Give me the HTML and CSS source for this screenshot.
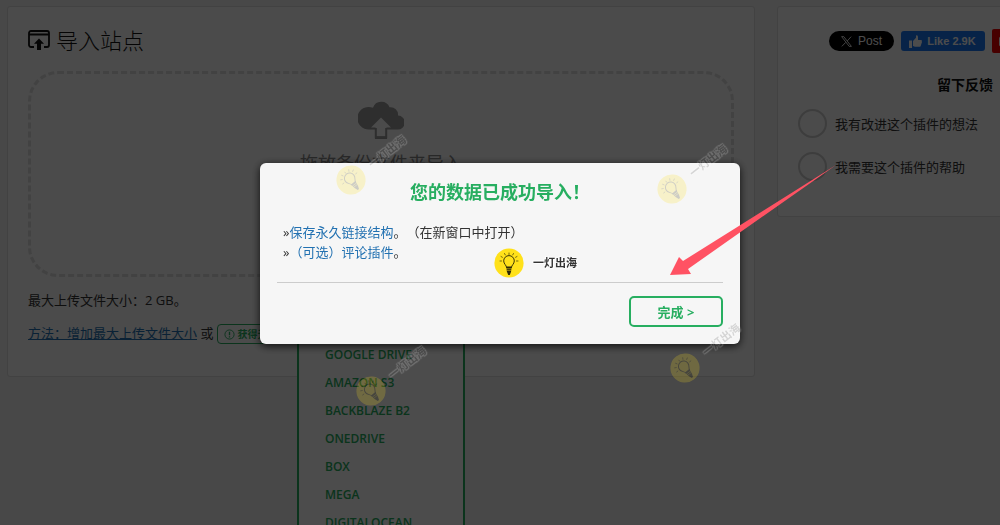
FILE: index.html
```
<!DOCTYPE html>
<html lang="zh-CN">
  <head>
    <meta charset="utf-8">
    <title>导入站点</title>
    <link rel="stylesheet" href="styles.css">
  </head>
  <body>
    <svg class="sprite" aria-hidden="true">
      <symbol id="bulb" viewBox="0 0 30 30">
        <circle cx="15" cy="15" r="14.6" fill="#ffe11a"/>
        <g fill="none" stroke="#3a3408" stroke-linecap="round">
          <path d="M12.600 19.500c0-2.400-2.900-3.400-2.900-6.600a5.300 5.300 0 0 1 10.600 0c0 3.200-2.900 4.200-2.900 6.600"/>
          <path d="M15 5v1.500M10.500 5.500l.8 1.400M19.500 5.500l-.8 1.400M7 8.500l1.400.8M23 8.500l-1.400.8M6 13h1.500M24 13h-1.500" stroke-width=".7"/>
        </g>
        <path d="M12.300 18.500h5.400l-.6 5-1.300 3.500h-1.600L12.900 23.500z" fill="#2d2906"/>
        <path d="M12.500 20.700h5M12.800 22.400h4.500" stroke="#ffe11a" stroke-width=".5"/>
      </symbol>
    </svg>

    <div class="page">
      <main class="card import">
        <h1>
          <svg class="title-icon" viewBox="0 0 22 20" aria-hidden="true">
            <path d="M6 17H3a2 2 0 0 1-2-2V3a2 2 0 0 1 2-2h16a2 2 0 0 1 2 2v12a2 2 0 0 1-2 2h-3M1 4.500h20" fill="none" stroke="currentColor" stroke-width="1.800"/>
            <path d="M11 8.500l5 5.200h-3V20H9v-6.300H6z" fill="currentColor"/>
          </svg>
          导入站点
        </h1>
        <div class="dropzone">
          <svg class="cloud" viewBox="0 0 46 38" aria-hidden="true">
            <path d="M11.500 28.500A11.300 11.300 0 1 1 15 6.800a8.800 8.800 0 0 1 16.500-.500A7.500 7.500 0 0 1 40 14.500a7 7 0 0 1-.500 14z" fill="#999"/>
            <path d="M18 27h10v10H18z" fill="#999" stroke="#999" stroke-width="2"/>
            <path d="M23 16.500l10 10h-4.500v9h-11v-9H13z" fill="#fafafa"/>
            <path d="M17.800 27v9.300h10.400V27" fill="none" stroke="#999" stroke-width="2"/>
          </svg>
          <p>拖放备份文件来导入</p>
          <ul class="sources">
            <li><a href="#">Google Drive</a></li>
            <li><a href="#">Amazon S3</a></li>
            <li><a href="#">Backblaze B2</a></li>
            <li><a href="#">OneDrive</a></li>
            <li><a href="#">Box</a></li>
            <li><a href="#">Mega</a></li>
            <li><a href="#">DigitalOcean</a></li>
          </ul>
        </div>
        <p class="limit">最大上传文件大小：2 GB。</p>
        <p class="how">
          <a href="#">方法：增加最大上传文件大小</a> 或
          <button class="unlimited" type="button">
            <svg viewBox="0 0 12 12" aria-hidden="true">
              <circle cx="6" cy="6" r="5" fill="none" stroke="currentColor"/>
              <path d="M6 3v3.800M6 8v1.300" stroke="currentColor" stroke-width="1.400"/>
            </svg>
            获得无限制
          </button>
        </p>
      </main>

      <aside class="sidebar">
        <div class="card feedback">
          <div class="social">
            <button class="post" type="button">
              <svg viewBox="0 0 12 12" aria-hidden="true">
                <path d="M1.500 1.500h2L10.500 10.500h-2zM10.300 1.500L6.700 5.500M5.300 6.800L1.700 10.500" fill="none" stroke="currentColor" stroke-width=".8"/>
              </svg>
              Post
            </button>
            <button class="like" type="button">
              <svg viewBox="0 0 13 13" aria-hidden="true">
                <path d="M0 5.500h3V13H0zM4 6l3-3.200V.800C7 0 9 0 9 2v3h3c1 0 1.200 1 .700 1.700.400.600.200 1.300-.300 1.700.200.600 0 1.200-.500 1.600.100.900-.300 1.800-1.400 1.800H6L4 11z" fill="currentColor"/>
              </svg>
              Like 2.9K
            </button>
            <button class="youtube" type="button" aria-label="YouTube">
              <svg viewBox="0 0 18 14" aria-hidden="true">
                <rect width="18" height="14" rx="3" fill="#fff"/>
                <path d="M7 4l5 3-5 3z" fill="#e00"/>
              </svg>
            </button>
          </div>
          <h2>留下反馈</h2>
          <label><input type="radio" name="feedback"> 我有改进这个插件的想法</label>
          <label><input type="radio" name="feedback"> 我需要这个插件的帮助</label>
        </div>
      </aside>
    </div>

    <div class="overlay">
      <section class="modal" role="dialog" aria-labelledby="modal-title">
        <h2 id="modal-title">您的数据已成功导入！</h2>
        <p>»<a href="#">保存永久链接结构</a>。（在新窗口中打开）</p>
        <p>»<a href="#">（可选）评论插件</a>。</p>
        <footer>
          <button class="done" type="button">完成 &gt;</button>
        </footer>
      </section>
    </div>

    <div class="marks">
      <div class="mark solid"><svg><use href="#bulb"/></svg><span>一灯出海</span></div>
      <div class="mark faint top-left"><svg><use href="#bulb"/></svg><span>一灯出海</span></div>
      <div class="mark faint top-right"><svg><use href="#bulb"/></svg><span>一灯出海</span></div>
      <div class="mark faint bottom-left"><svg><use href="#bulb"/></svg><span>一灯出海</span></div>
      <div class="mark faint bottom-right"><svg><use href="#bulb"/></svg><span>一灯出海</span></div>
      <svg class="arrow" viewBox="0 0 166 110" aria-hidden="true">
        <path d="M0 110L9 92l4 4L166 0 18 104l3 5z" fill="#ff5263"/>
      </svg>
    </div>
  </body>
</html>
```

FILE: styles.css
```
* { box-sizing: border-box; }
body {
  margin: 0;
  min-height: 100vh;
  overflow: hidden;
  background: #f0f0f0;
  color: #333;
  font: 13px/20px "Open Sans", "Noto Sans CJK SC", sans-serif;
  text-spacing-trim: space-all;
}
h1, h2, p, ul { margin: 0; }
a { color: #2271b1; }
button { font: inherit; cursor: pointer; }
.sprite { position: absolute; width: 0; height: 0; }

.page {
  display: grid;
  grid-template-columns: minmax(0, 1fr) 223px;
  gap: 22px;
  align-items: start;
  padding: 6px 0 0 7px;
}
.card {
  background: #fafafa;
  border: 1px solid #dcdcdc;
  border-radius: 3px;
}

.import { padding: 19px 20px 32px; }
h1 {
  display: flex;
  align-items: center;
  gap: 6px;
  color: #111;
  font-size: 22px;
  font-weight: 300;
  line-height: 28px;
}
.title-icon { width: 22px; height: 20px; }
.dropzone {
  position: relative;
  display: flex;
  flex-direction: column;
  align-items: center;
  height: 206px;
  margin: 17px 0 13px;
  padding-top: 27px;
  border: 3px dashed #dcdcdc;
  border-radius: 30px;
}
.cloud { width: 46px; height: 38px; }
.dropzone p {
  margin-top: 11px;
  color: #888;
  font-size: 18px;
  line-height: 26px;
}
.sources {
  position: absolute;
  top: 200px;
  z-index: 1;
  width: 168px;
  padding: 65px 0 10px 26px;
  background: #fdfdfd;
  border: 2px solid #27ae60;
  list-style: none;
}
.sources a {
  color: #27ae60;
  font-size: 12px;
  font-weight: 600;
  line-height: 28px;
  text-decoration: none;
  text-transform: uppercase;
}
.how { margin-top: 13px; }
.unlimited {
  height: 20px;
  padding: 0 6px;
  background: none;
  border: 1px solid #27ae60;
  border-radius: 4px;
  color: #27ae60;
  font-size: 10px;
  font-weight: 700;
  line-height: 16px;
}
.unlimited svg {
  width: 11px;
  height: 11px;
  vertical-align: -2px;
}

/* the panel is wider than its column and runs off the window */
.sidebar { overflow: hidden; }
.feedback {
  width: 376px;
  padding: 22px 20px 35px;
}
.social {
  display: flex;
  align-items: center;
  justify-content: center;
  gap: 7px;
  height: 24px;
}
.social button {
  display: flex;
  align-items: center;
  justify-content: center;
  gap: 5px;
  height: 20px;
  padding: 0;
  border: 0;
  color: #fff;
  font: 12px "Liberation Sans", sans-serif;
}
.social svg { width: 13px; height: 13px; }
.social .post {
  width: 65px;
  background: #000;
  border-radius: 10px;
}
.social .like {
  width: 84px;
  background: #1877f2;
  border-radius: 3px;
  font-weight: 700;
  font-size: 11px;
}
.social .youtube {
  justify-content: flex-start;
  width: 110px;
  height: 24px;
  padding-left: 7px;
  background: #e00;
  border-radius: 2px;
}
.feedback h2 {
  margin: 22px 0 14px;
  color: #111;
  font-size: 14px;
  line-height: 20px;
  text-align: center;
}
.feedback label {
  display: flex;
  align-items: center;
  gap: 8px;
}
.feedback label + label { margin-top: 14px; }
.feedback input {
  appearance: none;
  width: 29px;
  height: 29px;
  margin: 0;
  border: 2px solid #ccc;
  border-radius: 50%;
}

.overlay {
  position: fixed;
  inset: 0;
  z-index: 2;
  display: flex;
  align-items: center;
  justify-content: center;
  padding-bottom: 18px;
  background: rgba(0, 0, 0, .7);
}
.modal {
  width: 480px;
  padding: 17px;
  background: #f6f6f6;
  border-radius: 6px;
  box-shadow: 0 2px 8px rgba(0, 0, 0, .8);
}
.modal h2 {
  margin-bottom: 17px;
  color: #27ae60;
  font-size: 18px;
  line-height: 25px;
  text-align: center;
}
.modal p { padding-left: 6px; }
.modal p a { text-decoration: none; }
.modal footer {
  display: flex;
  justify-content: flex-end;
  margin-top: 20px;
  padding-top: 13px;
  border-top: 1px solid #ccc;
}
.done {
  width: 94px;
  height: 31px;
  background: none;
  border: 2px solid #27ae60;
  border-radius: 5px;
  color: #27ae60;
  font-weight: 700;
  line-height: 20px;
}

.marks {
  position: fixed;
  inset: 0;
  z-index: 3;
  pointer-events: none;
}
.mark {
  position: absolute;
  display: flex;
  align-items: center;
  gap: 9px;
  color: #333;
  font-size: 11px;
  font-weight: 700;
  white-space: nowrap;
  text-shadow: 0 0 2px #fff, 0 0 2px #fff, 1px 1px 1px #fff, -1px -1px 1px #fff;
}
.mark svg { width: 30px; height: 30px; }
.solid { left: 494px; top: 248px; }
.faint {
  opacity: .2;
  transform: rotate(-38deg);
  transform-origin: 15px 15px;
}
.faint span {
  color: #555;
  text-shadow: 0 0 1px #fff, 0 0 2px #fff, 1px 1px 1px #fff, -1px -1px 1px #fff, 1px -1px 1px #fff, -1px 1px 1px #fff;
}
.top-left { left: 336px; top: 165px; }
.top-right { left: 657px; top: 174px; }
.bottom-left { left: 356px; top: 376px; }
.bottom-right { left: 670px; top: 353px; }
.arrow {
  position: absolute;
  left: 670px;
  top: 165px;
  width: 166px;
  height: 110px;
}
```
